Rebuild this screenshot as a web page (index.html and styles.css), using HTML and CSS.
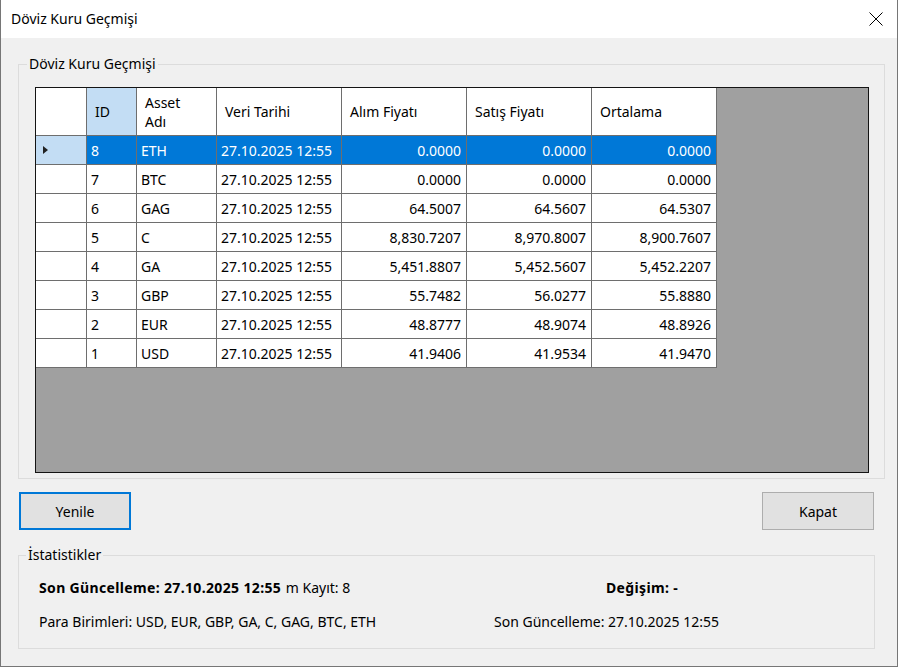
FILE: index.html
```html
<!DOCTYPE html>
<html lang="tr">
<head>
<meta charset="utf-8">
<title>Döviz Kuru Geçmişi</title>
<link rel="stylesheet" href="styles.css">
</head>
<body>
<div class="window">
  <div class="titlebar">
    <span class="title">Döviz Kuru Geçmişi</span>
    <svg class="close" width="14" height="14" viewBox="0 0 14 14"><path d="M0.5 0.5 L13.5 13.5 M13.5 0.5 L0.5 13.5" stroke="#000" stroke-width="1" fill="none"/></svg>
  </div>
  <div class="content">
    <fieldset class="group history">
      <legend>Döviz Kuru Geçmişi</legend>
      <div class="gridview">
        <div class="table">
          <div class="cell hdr corner"></div>
          <div class="cell hdr sel-col">ID</div>
          <div class="cell hdr">Asset<br>Adı</div>
          <div class="cell hdr">Veri Tarihi</div>
          <div class="cell hdr">Alım Fiyatı</div>
          <div class="cell hdr">Satış Fiyatı</div>
          <div class="cell hdr">Ortalama</div>

          <div class="cell rh rh-sel"><span class="arrow"></span></div>
          <div class="cell sel">8</div><div class="cell sel">ETH</div><div class="cell sel">27.10.2025 12:55</div>
          <div class="cell sel num">0.0000</div><div class="cell sel num">0.0000</div><div class="cell sel num">0.0000</div>

          <div class="cell rh"></div>
          <div class="cell">7</div><div class="cell">BTC</div><div class="cell">27.10.2025 12:55</div>
          <div class="cell num">0.0000</div><div class="cell num">0.0000</div><div class="cell num">0.0000</div>

          <div class="cell rh"></div>
          <div class="cell">6</div><div class="cell">GAG</div><div class="cell">27.10.2025 12:55</div>
          <div class="cell num">64.5007</div><div class="cell num">64.5607</div><div class="cell num">64.5307</div>

          <div class="cell rh"></div>
          <div class="cell">5</div><div class="cell">C</div><div class="cell">27.10.2025 12:55</div>
          <div class="cell num">8,830.7207</div><div class="cell num">8,970.8007</div><div class="cell num">8,900.7607</div>

          <div class="cell rh"></div>
          <div class="cell">4</div><div class="cell">GA</div><div class="cell">27.10.2025 12:55</div>
          <div class="cell num">5,451.8807</div><div class="cell num">5,452.5607</div><div class="cell num">5,452.2207</div>

          <div class="cell rh"></div>
          <div class="cell">3</div><div class="cell">GBP</div><div class="cell">27.10.2025 12:55</div>
          <div class="cell num">55.7482</div><div class="cell num">56.0277</div><div class="cell num">55.8880</div>

          <div class="cell rh"></div>
          <div class="cell">2</div><div class="cell">EUR</div><div class="cell">27.10.2025 12:55</div>
          <div class="cell num">48.8777</div><div class="cell num">48.9074</div><div class="cell num">48.8926</div>

          <div class="cell rh"></div>
          <div class="cell">1</div><div class="cell">USD</div><div class="cell">27.10.2025 12:55</div>
          <div class="cell num">41.9406</div><div class="cell num">41.9534</div><div class="cell num">41.9470</div>
        </div>
      </div>
    </fieldset>

    <div class="buttons">
      <button class="btn btn-focus">Yenile</button>
      <button class="btn">Kapat</button>
    </div>

    <fieldset class="group stats">
      <legend>İstatistikler</legend>
      <div class="stats-grid">
        <div class="stat-left"><b class="strong">Son Güncelleme: 27.10.2025 12:55</b> <span class="kayit">m Kayıt: 8</span></div>
        <div class="stat-right change"><b class="strong">Değişim: -</b></div>
        <div class="stat-left">Para Birimleri: USD, EUR, GBP, GA, C, GAG, BTC, ETH</div>
        <div class="stat-right">Son Güncelleme: 27.10.2025 12:55</div>
      </div>
    </fieldset>
  </div>
</div>
</body>
</html>
```
FILE: styles.css
```css
* { box-sizing: border-box; }
html, body { margin: 0; padding: 0; }
body {
  font-family: "Noto Sans", "Liberation Sans", sans-serif;
  font-size: 14px;
  color: #000;
  background: #f0f0f0;
}
.window {
  width: 898px;
  height: 667px;
  border: 1px solid #767676;
  border-top: none;
  background: #f0f0f0;
  display: flex;
  flex-direction: column;
  overflow: hidden;
}
.titlebar {
  height: 38px;
  background: #fff;
  display: flex;
  align-items: center;
  justify-content: space-between;
  padding: 0 14px 0 10px;
  flex: none;
}
.title { font-size: 14px; line-height: 20px; }
.close { display: block; }
.content {
  padding-left: 17px;
  display: flex;
  flex-direction: column;
  align-items: flex-start;
}
.group {
  margin: 0;
  border: 1px solid #dcdcdc;
  min-width: 0;
}
.group legend {
  padding: 0 2px;
  line-height: 20px;
  font-size: 14px;
}
.history {
  margin-top: 16px;
  width: 867px;
  padding: 13px 15px 5px 8px;
}
.gridview {
  margin-left: 8px;
  width: 834px;
  height: 386px;
  border: 1px solid #141414;
  background: #a0a0a0;
}
.table {
  display: grid;
  grid-template-columns: 51px 50px 80px 125px 125px 125px 125px;
  grid-auto-rows: 29px;
  grid-template-rows: 48px;
  width: 681px;
}
.cell {
  background: #fff;
  border-right: 1px solid #6e6e6e;
  border-bottom: 1px solid #6e6e6e;
  display: flex;
  align-items: center;
  padding: 0 4px;
  white-space: nowrap;
  line-height: 17px;
}
.hdr { padding: 0 8px; white-space: normal; line-height: 19px; }
.sel-col { background: #c3ddf4; }
.num { justify-content: flex-end; padding-right: 5px; }
.sel { background: #0078d7; color: #fff; }
.rh { padding: 0 0 0 7px; }
.rh-sel { background: #c3ddf4; }
.arrow {
  width: 0;
  height: 0;
  border-top: 4px solid transparent;
  border-bottom: 4px solid transparent;
  border-left: 5px solid #222;
}
.buttons {
  margin-top: 13px;
  margin-left: 1px;
  width: 855px;
  display: flex;
  justify-content: space-between;
}
.btn {
  width: 112px;
  height: 38px;
  background: #e1e1e1;
  border: 1px solid #adadad;
  font-family: inherit;
  font-size: 14px;
  color: #000;
  padding: 0;
}
.btn-focus { border: 2px solid #0078d7; }
.stats {
  margin-top: 15px;
  width: 857px;
  padding: 13px 10px 16px 7px;
}
.stats-grid {
  display: grid;
  grid-template-columns: 455px 1fr;
  row-gap: 14px;
  padding-left: 13px;
  line-height: 20px;
}
.stat-left { white-space: nowrap; }
.strong { font-weight: 700; letter-spacing: 0.35px; }
.kayit { margin-left: 1px; }
.change { padding-left: 112px; }
```
